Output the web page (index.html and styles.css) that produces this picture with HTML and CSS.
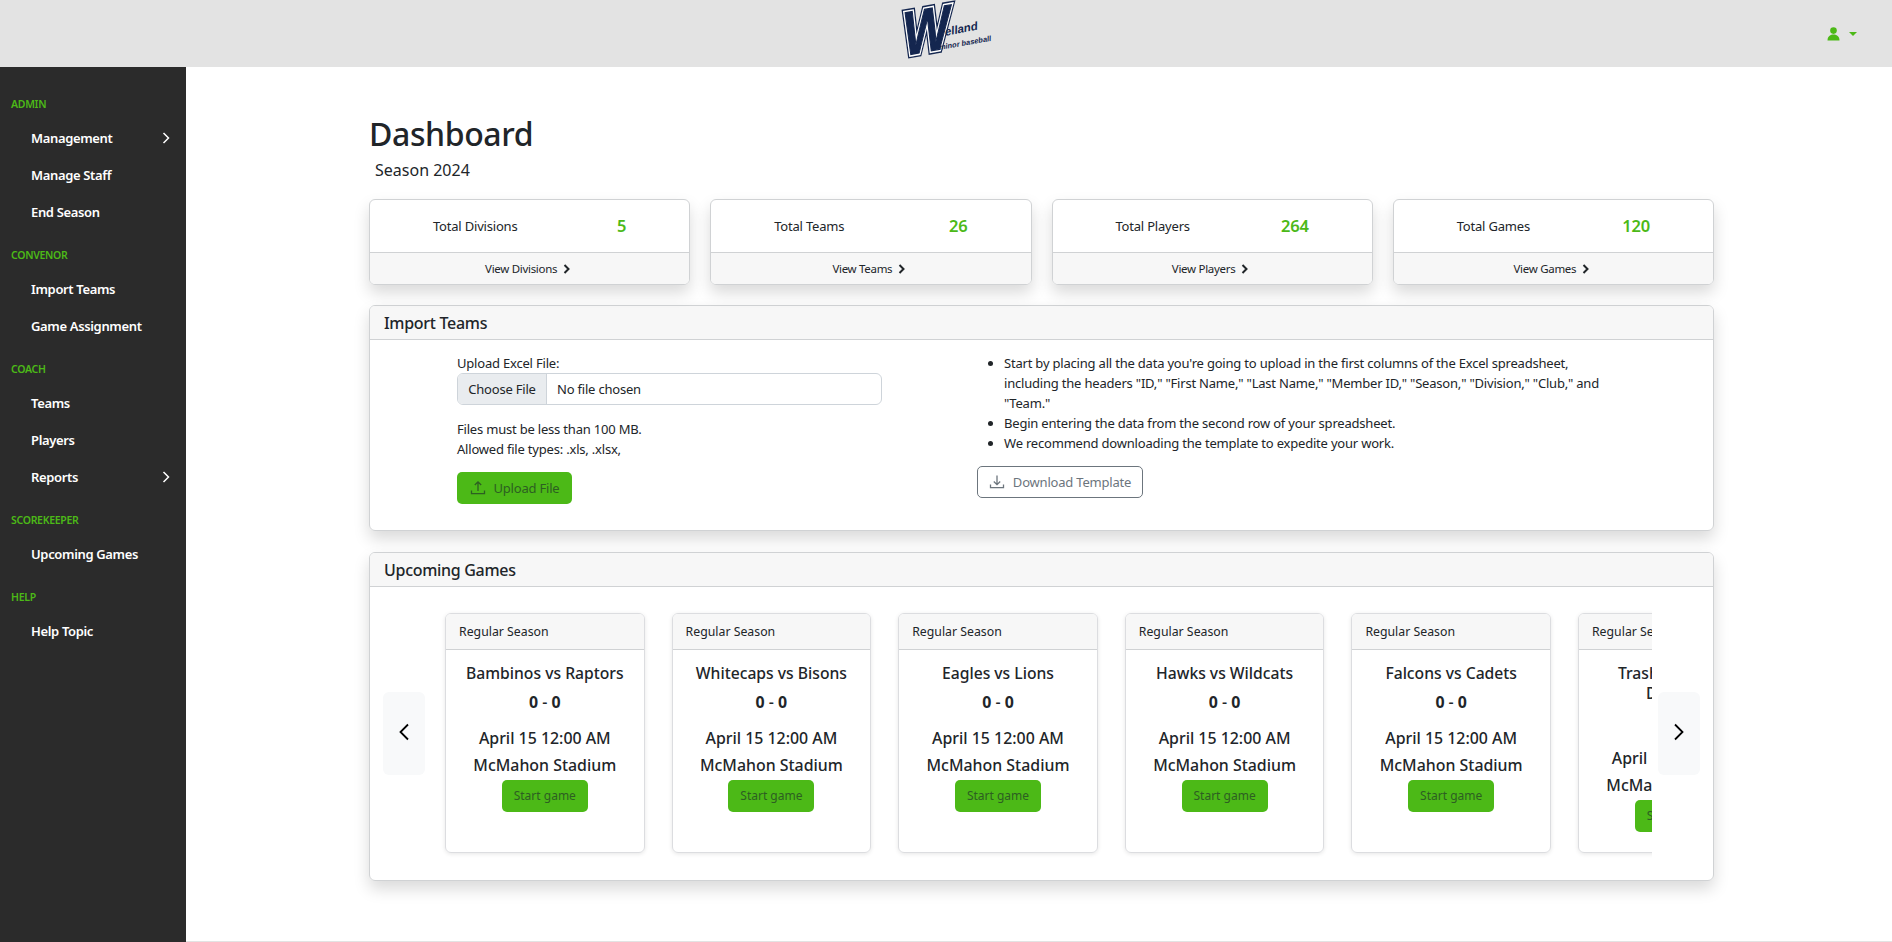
FILE: index.html
```html
<!DOCTYPE html>
<html lang="en">
<head>
  <meta charset="UTF-8" />
  <meta name="viewport" content="width=device-width, initial-scale=1" />
  <title>Dashboard – Welland Minor Baseball</title>
  <link rel="stylesheet" href="styles.css">
</head>
<body>

  <header class="topbar">
    <span></span>
    <svg class="logo" width="96" height="67" viewBox="0 0 96 67" role="img" aria-label="Welland minor baseball">
      <g transform="translate(4 56) rotate(-10) skewX(-14) scale(1 1.22)">
        <text class="logo-w logo-w-outer" x="0" y="0">W</text>
        <text class="logo-w logo-w-band" x="0" y="0">W</text>
        <text class="logo-w logo-w-fill" x="0" y="0">W</text>
      </g>
      <text class="logo-name" transform="translate(47 36) rotate(-11) skewX(-12)" x="0" y="0">elland</text>
      <text class="logo-sub" transform="translate(41 50) rotate(-10) skewX(-12)" x="0" y="0">minor baseball</text>
    </svg>
    <div class="user-menu">
      <svg width="13" height="14" viewBox="0 0 13 14" aria-hidden="true">
        <circle cx="6.5" cy="3.6" r="3.3" />
        <path d="M.5 13.5c0-3.600 2.200-6 6-6s6 2.400 6 6z" />
      </svg>
      <span class="caret"></span>
    </div>
  </header>

  <div class="layout">
    <nav class="sidebar">
      <h6>Admin</h6>
      <a href="#">Management
        <svg class="nav-chevron" width="8" height="12" viewBox="0 0 8 12"><path d="M1.500 1l5 5-5 5" /></svg>
      </a>
      <a href="#">Manage Staff</a>
      <a href="#">End Season</a>
      <h6>Convenor</h6>
      <a href="#">Import Teams</a>
      <a href="#">Game Assignment</a>
      <h6>Coach</h6>
      <a href="#">Teams</a>
      <a href="#">Players</a>
      <a href="#">Reports
        <svg class="nav-chevron" width="8" height="12" viewBox="0 0 8 12"><path d="M1.500 1l5 5-5 5" /></svg>
      </a>
      <h6>Scorekeeper</h6>
      <a href="#">Upcoming Games</a>
      <h6>Help</h6>
      <a href="#">Help Topic</a>
    </nav>

    <main class="content">
      <h1>Dashboard</h1>
      <p class="season">Season 2024</p>

      <section class="stats">
        <div class="stat">
          <div class="stat-body"><span>Total Divisions</span><strong>5</strong></div>
          <a class="stat-foot" href="#">View Divisions <svg width="7" height="10" viewBox="0 0 7 10"><path d="M1.500 1l4 4-4 4" /></svg></a>
        </div>
        <div class="stat">
          <div class="stat-body"><span>Total Teams</span><strong>26</strong></div>
          <a class="stat-foot" href="#">View Teams <svg width="7" height="10" viewBox="0 0 7 10"><path d="M1.500 1l4 4-4 4" /></svg></a>
        </div>
        <div class="stat">
          <div class="stat-body"><span>Total Players</span><strong>264</strong></div>
          <a class="stat-foot" href="#">View Players <svg width="7" height="10" viewBox="0 0 7 10"><path d="M1.500 1l4 4-4 4" /></svg></a>
        </div>
        <div class="stat">
          <div class="stat-body"><span>Total Games</span><strong>120</strong></div>
          <a class="stat-foot" href="#">View Games <svg width="7" height="10" viewBox="0 0 7 10"><path d="M1.500 1l4 4-4 4" /></svg></a>
        </div>
      </section>

      <section class="panel">
        <h2 class="panel-head">Import Teams</h2>
        <div class="import-body">
          <div class="upload">
            <label for="excel">Upload Excel File:</label>
            <div class="file-input">
              <span class="file-btn">Choose File</span>
              <span class="file-name">No file chosen</span>
            </div>
            <p class="file-note">Files must be less than 100 MB.<br>Allowed file types: .xls, .xlsx,</p>
            <button class="btn-green btn-upload" type="button">
              <svg class="btn-icon" width="16" height="16" viewBox="0 0 16 16"><path d="M8 11V2M4.800 5L8 1.800 11.200 5M1.500 10.500v3.200h13v-3.200" /></svg>
              Upload File
            </button>
          </div>
          <div class="help">
            <ul>
              <li>Start by placing all the data you're going to upload in the first columns of the Excel spreadsheet, including the headers "ID," "First Name," "Last Name," "Member ID," "Season," "Division," "Club," and "Team."</li>
              <li>Begin entering the data from the second row of your spreadsheet.</li>
              <li>We recommend downloading the template to expedite your work.</li>
            </ul>
            <button class="btn-outline" type="button">
              <svg class="btn-icon" width="16" height="16" viewBox="0 0 16 16"><path d="M8 1.500v9M4.800 7.500L8 10.700l3.200-3.200M1.500 10.500v3.200h13v-3.200" /></svg>
              Download Template
            </button>
          </div>
        </div>
      </section>

      <section class="panel panel-games">
        <h2 class="panel-head">Upcoming Games</h2>
        <div class="carousel">
          <button class="arrow" type="button" aria-label="Previous"><svg width="12" height="18" viewBox="0 0 12 18"><path d="M10 1.500L2.500 9l7.500 7.500" /></svg></button>
          <div class="track">
            <article class="game">
              <div class="game-head">Regular Season</div>
              <div class="game-body">
                <h3>Bambinos vs Raptors</h3>
                <p class="score"><b>0</b> - <b>0</b></p>
                <p class="when">April 15 12:00 AM</p>
                <p class="where">McMahon Stadium</p>
                <button class="btn-green" type="button">Start game</button>
              </div>
            </article>
            <article class="game">
              <div class="game-head">Regular Season</div>
              <div class="game-body">
                <h3>Whitecaps vs Bisons</h3>
                <p class="score"><b>0</b> - <b>0</b></p>
                <p class="when">April 15 12:00 AM</p>
                <p class="where">McMahon Stadium</p>
                <button class="btn-green" type="button">Start game</button>
              </div>
            </article>
            <article class="game">
              <div class="game-head">Regular Season</div>
              <div class="game-body">
                <h3>Eagles vs Lions</h3>
                <p class="score"><b>0</b> - <b>0</b></p>
                <p class="when">April 15 12:00 AM</p>
                <p class="where">McMahon Stadium</p>
                <button class="btn-green" type="button">Start game</button>
              </div>
            </article>
            <article class="game">
              <div class="game-head">Regular Season</div>
              <div class="game-body">
                <h3>Hawks vs Wildcats</h3>
                <p class="score"><b>0</b> - <b>0</b></p>
                <p class="when">April 15 12:00 AM</p>
                <p class="where">McMahon Stadium</p>
                <button class="btn-green" type="button">Start game</button>
              </div>
            </article>
            <article class="game">
              <div class="game-head">Regular Season</div>
              <div class="game-body">
                <h3>Falcons vs Cadets</h3>
                <p class="score"><b>0</b> - <b>0</b></p>
                <p class="when">April 15 12:00 AM</p>
                <p class="where">McMahon Stadium</p>
                <button class="btn-green" type="button">Start game</button>
              </div>
            </article>
            <article class="game">
              <div class="game-head">Regular Season</div>
              <div class="game-body">
                <h3>Trash Pandas vs Dragons</h3>
                <p class="score"><b>0</b> - <b>0</b></p>
                <p class="when">April 15 12:00 AM</p>
                <p class="where">McMahon Stadium</p>
                <button class="btn-green" type="button">Start game</button>
              </div>
            </article>
          </div>
          <button class="arrow" type="button" aria-label="Next"><svg width="12" height="18" viewBox="0 0 12 18"><path d="M2 1.500L9.500 9 2 16.500" /></svg></button>
        </div>
      </section>
    </main>
  </div>

</body>
</html>
```

FILE: styles.css
```css
* {
  box-sizing: border-box;
}
body {
  margin: 0;
  height: 100vh;
  overflow: hidden;
  display: flex;
  flex-direction: column;
  background: #fff;
  color: #212529;
  font-family: 'Noto Sans', 'Open Sans', sans-serif;
  font-size: 13px;
  line-height: 20px;
  letter-spacing: -0.2px;
}
svg path {
  fill: none;
  stroke: currentColor;
}

/* top bar */
.topbar {
  flex: 0 0 67px;
  display: grid;
  grid-template-columns: 1fr auto 1fr;
  align-items: center;
  background: #e3e3e3;
}
.logo {
  overflow: visible;
}
.logo text {
  font-family: 'Liberation Sans', sans-serif;
  font-weight: 700;
  letter-spacing: 0;
  fill: #14264f;
}
.logo-w {
  font-size: 50px;
}
.logo-w-outer {
  stroke: #14264f;
  stroke-width: 6px;
}
.logo-w-band {
  stroke: #fff;
  stroke-width: 3.5px;
}
.logo-w-fill {
  stroke: #14264f;
  stroke-width: 1px;
}
.logo-name {
  font-size: 11.5px;
}
.logo-sub {
  font-size: 7.5px;
}
.user-menu {
  display: flex;
  align-items: center;
  justify-content: flex-end;
  gap: 9px;
  padding-right: 35px;
  color: #4cb917;
}
.user-menu svg {
  fill: #4cb917;
}
.user-menu svg path {
  fill: #4cb917;
  stroke: none;
}
.caret {
  border-top: 4px solid #4cb917;
  border-left: 4px solid transparent;
  border-right: 4px solid transparent;
}

/* sidebar */
.layout {
  flex: 1;
  display: flex;
  min-height: 0;
}
.sidebar {
  flex: 0 0 186px;
  padding-top: 17px;
  background: #2b2b2b;
}
.sidebar h6 {
  margin: 15px 0 5px 11px;
  font-size: 10.500px;
  line-height: 20px;
  font-weight: 600;
  letter-spacing: -0.3px;
  text-transform: uppercase;
  color: #4cb917;
}
.sidebar h6:first-child {
  margin-top: 10px;
}
.sidebar a {
  display: flex;
  align-items: center;
  justify-content: space-between;
  height: 37px;
  padding: 0 16px 0 31px;
  color: #fff;
  font-weight: 600;
  font-size: 13px;
  letter-spacing: -0.35px;
  text-decoration: none;
}
.nav-chevron path {
  stroke-width: 1.5;
}

/* main */
.content {
  flex: 1;
  min-width: 0;
  padding: 0 178px 0 183px;
  border-bottom: 1px solid #e3e3e3;
}
h1 {
  margin: 46px 0 0;
  font-size: 32px;
  line-height: 42px;
  font-weight: 500;
  letter-spacing: -0.4px;
}
.season {
  margin: 4px 0 18px 6px;
  font-size: 16px;
  line-height: 22px;
  letter-spacing: 0;
}

.stats {
  display: grid;
  grid-template-columns: repeat(4, 1fr);
  gap: 20px;
  margin-bottom: 20px;
}
.stat {
  border: 1px solid #d0d2d4;
  border-radius: 6px;
  overflow: hidden;
  box-shadow: 0 8px 16px rgba(0, 0, 0, 0.15);
}
.stat-body {
  height: 52px;
  display: flex;
  justify-content: space-between;
  align-items: center;
  padding: 0 63px 0 63px;
}
.stat-body strong {
  color: #4cb917;
  font-size: 16.500px;
  font-weight: 600;
}
.stat-foot {
  display: flex;
  align-items: center;
  justify-content: center;
  gap: 6px;
  height: 32px;
  padding-right: 4px;
  border-top: 1px solid #d0d2d4;
  background: #f7f7f7;
  color: #212529;
  font-size: 11.500px;
  letter-spacing: -0.3px;
  text-decoration: none;
}
.stat-foot path {
  stroke-width: 2;
}

.panel {
  border: 1px solid #d0d2d4;
  border-radius: 6px;
  overflow: hidden;
  box-shadow: 0 8px 16px rgba(0, 0, 0, 0.15);
  margin-bottom: 21px;
}
.panel-head {
  margin: 0;
  padding: 0 14px;
  height: 34px;
  line-height: 35px;
  border-bottom: 1px solid #d0d2d4;
  background: #f7f7f7;
  font-size: 16px;
  font-weight: 500;
  letter-spacing: -0.3px;
}

/* import */
.import-body {
  display: flex;
  height: 190px;
  padding-top: 13px;
}
.upload {
  flex: 0 0 425px;
  margin-left: 87px;
}
.upload label {
  display: block;
  margin-bottom: 0;
}
.file-input {
  display: flex;
  height: 32px;
  border: 1px solid #ced4da;
  border-radius: 6px;
  overflow: hidden;
  line-height: 30px;
}
.file-btn {
  width: 89px;
  text-align: center;
  background: #e9ecef;
  border-right: 1px solid #ced4da;
}
.file-name {
  padding-left: 10px;
}
.file-note {
  margin: 14px 0 13px;
}
button {
  font-family: inherit;
  font-size: 13px;
  letter-spacing: inherit;
  cursor: pointer;
}
.btn-green {
  height: 32px;
  padding: 0 10px;
  border: none;
  border-radius: 5px;
  background: #4cb917;
  color: #2d5f22;
}
.btn-upload {
  display: flex;
  align-items: center;
  gap: 8px;
  width: 115px;
  justify-content: center;
}
.btn-icon path {
  stroke-width: 1.3;
}
.help {
  margin-left: 95px;
  flex: 0 0 635px;
}
.help ul {
  margin: 0 0 13px;
  padding-left: 27px;
}
.btn-outline {
  display: flex;
  align-items: center;
  justify-content: center;
  gap: 8px;
  width: 166px;
  height: 32px;
  padding: 0;
  background: #fff;
  border: 1px solid #6c757d;
  border-radius: 5px;
  color: #6c757d;
}

/* games carousel */
.carousel {
  display: flex;
  align-items: center;
  height: 293px;
  padding: 0 13px;
}
.arrow {
  flex: 0 0 42px;
  height: 83px;
  padding: 0;
  border: none;
  border-radius: 6px;
  background: #f8f9fa;
  color: #000;
}
.arrow path {
  stroke-width: 1.8;
}
.track {
  flex: 1;
  min-width: 0;
  display: flex;
  gap: 27px;
  margin: 0 6px 0 7px;
  padding: 26px 14px 28px 13px;
  overflow: hidden;
  letter-spacing: 0;
}
.game {
  flex: 0 0 199.600px;
  height: 240px;
  border: 1px solid #dcdde0;
  border-radius: 6px;
  box-shadow: 0 1px 4px rgba(0, 0, 0, 0.1);
  text-align: center;
}
.game-head {
  height: 36px;
  line-height: 35px;
  padding-left: 13px;
  text-align: left;
  border-bottom: 1px solid #d0d2d4;
  border-radius: 5px 5px 0 0;
  background: #f7f7f7;
  font-size: 12.300px;
}
.game-body {
  padding: 13px 12px 0;
}
.game h3 {
  margin: 0;
  font-size: 15.700px;
  line-height: 20px;
  font-weight: 500;
}
.game p {
  margin: 0;
  font-size: 15.900px;
  font-weight: 500;
}
.score {
  padding: 9px 0 13px;
  line-height: 20px;
}
.score b {
  font-weight: 700;
}
.when,
.where {
  line-height: 27px;
}
.game .btn-green {
  display: block;
  width: 86px;
  margin: 1px auto 0;
  padding: 0;
  font-size: 12px;
}
```
